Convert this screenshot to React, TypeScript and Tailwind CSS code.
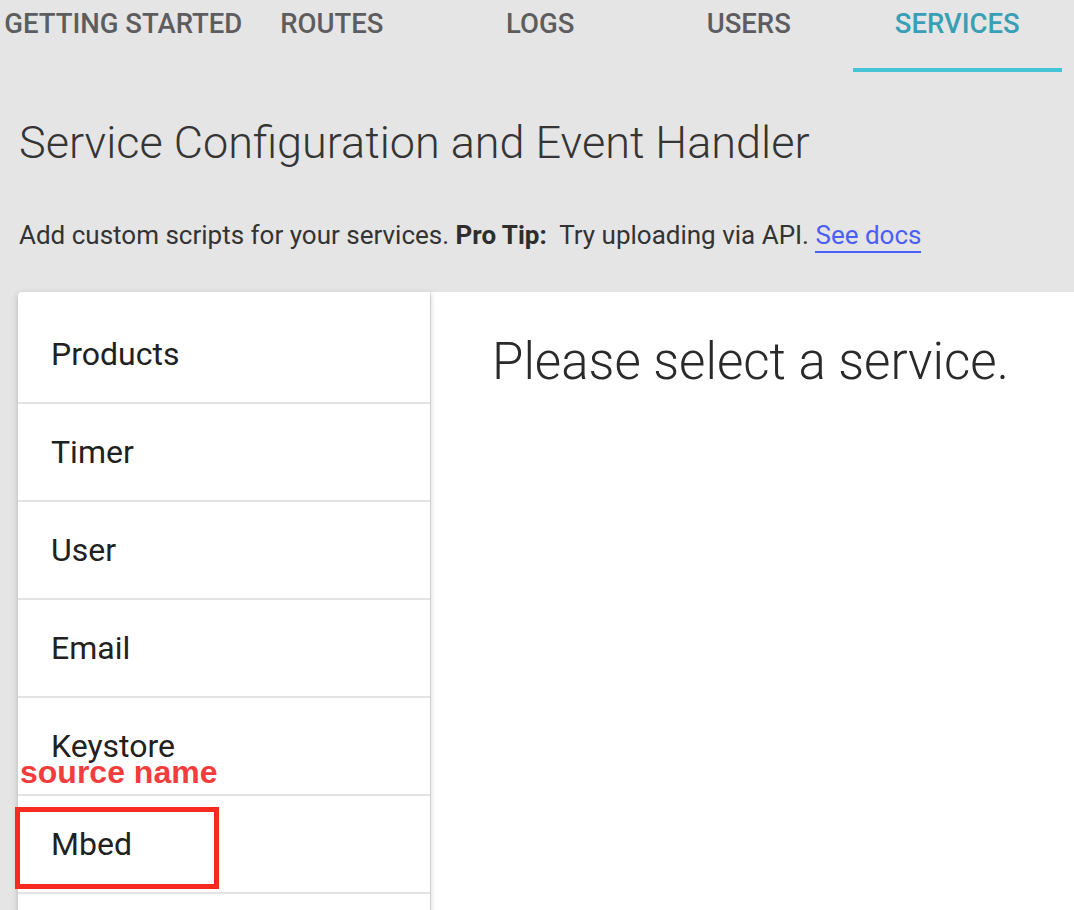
import React from 'react';

const tabs = ['GETTING STARTED', 'ROUTES', 'LOGS', 'USERS', 'SERVICES'];
const services = ['Products', 'Timer', 'User', 'Email', 'Keystore', 'Mbed', ''];

export default function App() {
  return (
    <div className="relative h-[910px] w-[1074px] overflow-hidden bg-[#e5e5e5] font-['Roboto',sans-serif]">
      {/* tabs */}
      <div className="flex pl-[19px]">
        {tabs.map((t) => {
          const active = t === 'SERVICES';
          return (
            <div key={t} className="relative flex h-[72px] w-[208.5px] shrink-0 justify-center">
              <span
                className={`whitespace-nowrap pt-[8px] text-[27.5px] font-medium leading-[32px] ${
                  active ? 'text-[#389fb5]' : 'text-[#5d5d60]'
                }`}
              >
                {t}
              </span>
              {active && <div className="absolute bottom-0 left-0 h-[4px] w-full bg-[#48c2d7]" />}
            </div>
          );
        })}
      </div>

      <div className="pl-[19px]">
        <h1 className="mt-[43px] whitespace-nowrap text-[45px] font-light leading-[56px] text-[#353535]">
          Service Configuration and Event Handler
        </h1>
        <p className="mt-[48px] whitespace-nowrap text-[26px] leading-[32px] text-[#333333]">
          Add custom scripts for your services. <b className="font-bold text-[#2e2e2e]">Pro Tip:</b>&nbsp; Try uploading via
          API.{' '}
          <a className="border-b-2 border-[#4b5ff7] pb-[1px] text-[#4b5ff7]" href="#">
            See docs
          </a>
        </p>
      </div>

      <div className="mt-[41px] flex items-start">
        <div className="relative z-10 ml-[18px] w-[412px] shrink-0 rounded-tl-[4px] bg-white pt-[14px] shadow-[0_2px_6px_rgba(0,0,0,0.22)]">
          {services.map((s, i) => (
            <div key={i} className="flex h-[98px] items-center border-b-2 border-[#e4e4e4] pl-[33px]">
              <span className="text-[32px] leading-none text-[#212121]">{s}</span>
            </div>
          ))}
        </div>
        <div className="ml-[1px] h-[700px] flex-1 bg-white pl-[61px] pt-[39px]">
          <p className="whitespace-nowrap text-[51px] font-light leading-[62px] text-[#2a2a2a]">
            Please select a service.
          </p>
        </div>
      </div>

      {/* annotation overlay */}
      <span className="absolute left-[20px] top-[752px] z-20 font-['Liberation_Sans',sans-serif] text-[32px] font-bold leading-[40px] text-[#f33c3c]">
        source name
      </span>
      <div className="absolute left-[15px] top-[807px] z-20 h-[82px] w-[204px] border-[5px] border-[#f62a1e]" />
    </div>
  );
}
